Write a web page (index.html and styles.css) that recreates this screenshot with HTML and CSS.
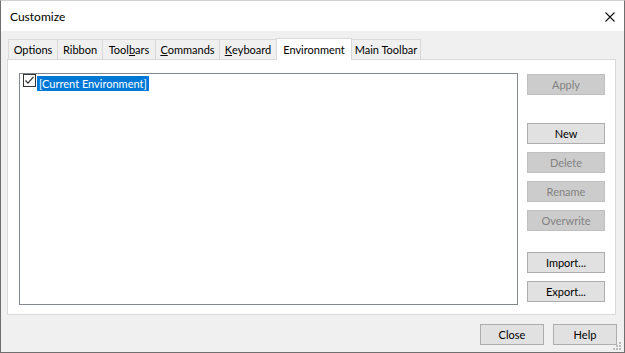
FILE: index.html
```html
<!DOCTYPE html>
<html>
<head>
<meta charset="utf-8">
<title>Customize</title>
<link rel="stylesheet" href="styles.css">
</head>
<body>
<div class="window">
  <div class="titlebar">
    <span class="title">Customize</span>
    <svg class="close-x" width="10" height="10" viewBox="0 0 10 10"><path d="M0.5 0.5 L9.5 9.5 M9.5 0.5 L0.5 9.5" stroke="#111" stroke-width="1.1" fill="none"/></svg>
  </div>
  <div class="client">
    <div class="tabs">
      <div class="tab t-options">Options</div>
      <div class="tab t-ribbon">Ribbon</div>
      <div class="tab t-toolbars">Tool<u>b</u>ars</div>
      <div class="tab t-commands"><u>C</u>ommands</div>
      <div class="tab t-keyboard"><u>K</u>eyboard</div>
      <div class="tab t-env selected">Environment</div>
      <div class="tab t-main">Main Toolbar</div>
    </div>
    <div class="panel">
      <div class="listbox">
        <div class="item">
          <span class="check"><svg width="11" height="11" viewBox="0 0 11 11"><path d="M1.5 5.5 L4 8.2 L9.5 1.8" stroke="#333" stroke-width="1.2" fill="none"/></svg></span>
          <span class="label">[Current Environment]</span>
        </div>
      </div>
      <div class="side">
        <button class="btn disabled">Apply</button>
        <button class="btn mt-large">New</button>
        <button class="btn disabled">Delete</button>
        <button class="btn disabled">Rename</button>
        <button class="btn disabled">Overwrite</button>
        <button class="btn mt-mid">Import...</button>
        <button class="btn">Export...</button>
      </div>
    </div>
    <div class="footer">
      <button class="btn wide">Close</button>
      <button class="btn wide">Help</button>
    </div>
  </div>
  <svg class="grip" width="8" height="8" viewBox="0 0 8 8">
    <rect x="6" y="0" width="2" height="2" fill="#bcbcbc"/>
    <rect x="3" y="3" width="2" height="2" fill="#bcbcbc"/>
    <rect x="6" y="3" width="2" height="2" fill="#bcbcbc"/>
    <rect x="0" y="6" width="2" height="2" fill="#bcbcbc"/>
    <rect x="3" y="6" width="2" height="2" fill="#bcbcbc"/>
    <rect x="6" y="6" width="2" height="2" fill="#bcbcbc"/>
  </svg>
</div>
</body>
</html>
```

FILE: styles.css
```css
html, body {
  margin: 0;
  padding: 0;
  background: #ffffff;
}

.window {
  position: relative;
  width: 625px;
  height: 353px;
  box-sizing: border-box;
  border: 1px solid #6f6f6f;
  border-top-color: #d0d0d0;
  background: #f0f0f0;
  display: flex;
  flex-direction: column;
  font-family: "Lato", "Liberation Sans", sans-serif;
  font-size: 11px;
  color: #000;
}

.titlebar {
  height: 30px;
  background: #ffffff;
  display: flex;
  align-items: center;
  padding-left: 9px;
  flex: none;
}

.title {
  font-size: 12px;
  color: #000;
}

.close-x {
  margin-left: auto;
  margin-right: 9px;
  margin-top: 2px;
}

.client {
  flex: 1;
  display: flex;
  flex-direction: column;
}

.tabs {
  display: flex;
  height: 20px;
  margin: 8px 0 0 7px;
  position: relative;
  z-index: 1;
}

.tab {
  box-sizing: border-box;
  height: 20px;
  border: 1px solid #d9d9d9;
  border-bottom: none;
  background: #f0f0f0;
  margin-left: -1px;
  display: flex;
  align-items: center;
  justify-content: center;
  white-space: nowrap;
  line-height: 1;
}

.tab:first-child { margin-left: 0; }

.tab.selected {
  background: #ffffff;
  height: 22px;
  margin-top: -1px;
  position: relative;
  z-index: 2;
  padding-bottom: 1px;
}

.t-options { width: 50px; }
.t-ribbon { width: 46px; }
.t-toolbars { width: 54px; }
.t-commands { width: 65px; }
.t-keyboard { width: 58px; }
.t-env { width: 76px; }
.t-main { width: 70px; }

.panel {
  height: 256px;
  box-sizing: border-box;
  margin: 0 8px 0 6px;
  border: 1px solid #d9d9d9;
  background: #ffffff;
  display: flex;
  padding: 13px 10px 9px 11px;
}

.listbox {
  flex: 1;
  border: 1px solid #828790;
  background: #ffffff;
}

.item {
  display: flex;
  align-items: flex-start;
  height: 17px;
  padding-left: 3px;
}

.check {
  box-sizing: border-box;
  width: 13px;
  height: 13px;
  border: 1px solid #333333;
  background: #ffffff;
  display: flex;
  align-items: center;
  justify-content: center;
  flex: none;
}

.label {
  margin-left: 1px;
  margin-top: 2px;
  background: #0078d7;
  color: #ffffff;
  height: 15px;
  line-height: 15px;
  padding: 0 2px;
  white-space: nowrap;
}

.side {
  width: 78px;
  margin-left: 9px;
  display: flex;
  flex-direction: column;
  gap: 8px;
  padding-top: 1px;
}

.btn {
  box-sizing: border-box;
  height: 21px;
  width: 78px;
  border: 1px solid #adadad;
  background: #e1e1e1;
  color: #000;
  font-family: inherit;
  font-size: 11px;
  padding: 0;
  margin: 0;
  line-height: 1;
}

.btn.disabled {
  background: #cccccc;
  border-color: #bfbfbf;
  color: #838383;
}

.side .mt-large { margin-top: 20px; }
.side .mt-mid { margin-top: 13px; }

.footer {
  display: flex;
  justify-content: flex-end;
  gap: 9px;
  margin-top: 9px;
  padding-right: 7px;
}

.btn.wide { width: 64px; }

.grip {
  position: absolute;
  right: 3px;
  bottom: 2px;
}
```
